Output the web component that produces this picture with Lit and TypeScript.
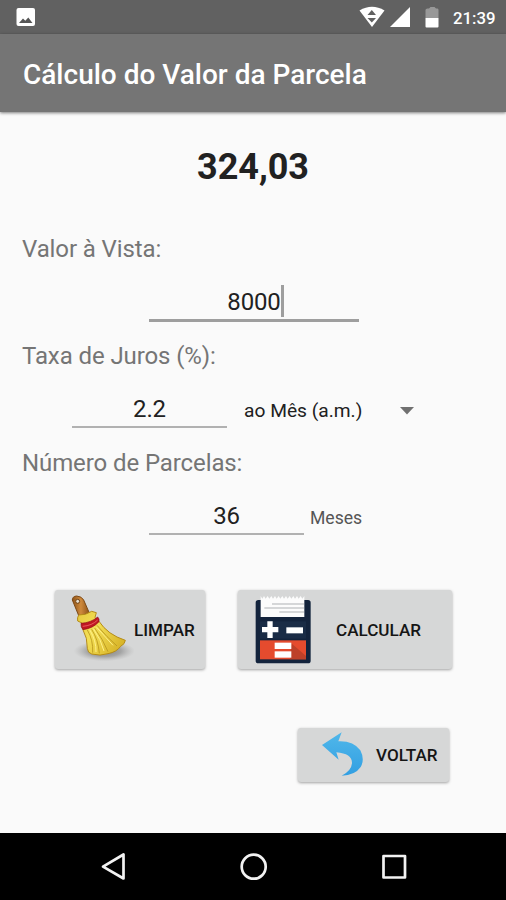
import { LitElement, html, css, svg } from "lit";
import { customElement } from "lit/decorators.js";

const broom = svg`
  <defs>
    <radialGradient id="shade"><stop offset="0" stop-color="#777" stop-opacity=".95"/><stop offset=".55" stop-color="#8a8a8a" stop-opacity=".65"/><stop offset="1" stop-color="#aaa" stop-opacity="0"/></radialGradient>
    <linearGradient id="straw" x1="0" y1="0" x2="1" y2=".6"><stop offset="0" stop-color="#e6c93e"/><stop offset=".45" stop-color="#f3df55"/><stop offset="1" stop-color="#d9b62a"/></linearGradient>
    <linearGradient id="wood" x1="0" y1="0" x2="1" y2="0"><stop offset="0" stop-color="#8d5218"/><stop offset=".5" stop-color="#cf8a3c"/><stop offset="1" stop-color="#8d5218"/></linearGradient>
  </defs>
  <ellipse cx="178" cy="213" rx="92" ry="31" fill="url(#shade)"/>
  <path d="M82 60Q82 49 95 48Q110 49 116 60L133 99L102 109Z" fill="url(#wood)" stroke="#7c4916" stroke-width="3"/>
  <circle cx="98" cy="64" r="6" fill="#e7dfd0" stroke="#6e4215" stroke-width="3"/>
  <path d="M101 105Q122 106 140 94L154 98L150 112L162 124Q188 164 241 181Q240 192 227 199Q215 216 189 221Q166 229 140 222Q128 219 127 205Q128 174 113 147L111 129L98 123Q96 113 101 105Z" fill="url(#straw)" stroke="#b58c18" stroke-width="3" stroke-linejoin="round"/>
  <path d="M127 150Q145 180 143 218M140 148Q160 180 163 220M149 144Q174 178 189 215M156 136Q186 172 216 198" fill="none" stroke="#b9961e" stroke-width="2.5"/>
  <path d="M134 149Q154 182 153 216M145 146Q168 178 177 213M155 142Q184 174 204 196" fill="none" stroke="#fff08a" stroke-width="3"/>
  <path d="M108 130Q138 128 158 111Q164 116 162 125Q144 145 114 149Q107 142 108 130Z" fill="#c01722" stroke="#8e0d16" stroke-width="2"/>
  <path d="M113 139Q141 137 158 120" fill="none" stroke="#ea5a5e" stroke-width="3"/>`;

const calculator = svg`
  <rect x="77" y="60" width="165" height="190" rx="8" fill="#13233c"/>
  <rect x="90" y="124" width="138" height="52" fill="#1a2c46"/>
  <path d="M92 48l5 8 5-8 5 8 6-8 5 8 6-8 5 8 6-8 5 8 6-8 5 8 6-8 5 8 6-8 5 8 6-8 5 8 6-8 5 8 6-8 5 8 6-8 5 8 6-8V111H92Z" fill="#fcfcfc"/>
  <path d="M126 72H222M103 84H222M148 96H222" stroke="#aeb1b4" stroke-width="3"/>
  <path d="M112 124h16v17h17v16h-17v17h-16v-17H96v-16h16Z" fill="#fff"/>
  <rect x="169" y="142" width="50" height="18" fill="#fff"/>
  <rect x="90" y="181" width="138" height="57" fill="#e54b2e"/>
  <path d="M184 190L228 228V238H180Z" fill="#bd4029"/>
  <rect x="134" y="188" width="50" height="19" fill="#fff"/>
  <rect x="134" y="214" width="50" height="19" fill="#fff"/>`;

@customElement("app-root")
export class AppRoot extends LitElement {
  static styles = css`
    :host { display: flex; flex-direction: column; height: 900px; background: #fafafa; font-family: Roboto, sans-serif; color: #212121; overflow: hidden; }
    svg { display: block; flex: none; }
    .status { height: 34px; background: #616161; display: flex; align-items: center; box-sizing: border-box; padding: 0 10px 0 16px; color: #fff; }
    .spacer { flex: 1; }
    .clock { font-size: 16.8px; font-weight: 500; line-height: 34px; width: 43px; white-space: nowrap; padding-top: 1px; }
    .bar { height: 78px; background: #757575; box-shadow: 0 1px 3px rgba(0,0,0,.5); display: flex; align-items: center; padding: 3px 0 0 23px; box-sizing: border-box; }
    h1 { margin: 0; color: #fff; font-size: 28px; font-weight: 500; line-height: 36px; white-space: nowrap; }
    main { flex: 1; min-height: 0; }
    .result { margin-top: 31px; text-align: center; font-size: 36px; font-weight: 700; line-height: 48px; letter-spacing: -.05px; }
    .label { margin-left: 22px; font-size: 24px; line-height: 32px; color: #757575; letter-spacing: -.1px; height: 32px; }
    .first { margin-top: 42px; }
    .row { display: flex; height: 36px; margin: 21px 0 18px; align-items: flex-start; }
    .field { box-sizing: border-box; height: 35px; width: 155px; border-bottom: 2px solid #b1b1b1; text-align: center; font-size: 24px; line-height: 32px; flex: none; letter-spacing: -.15px; }
    .focus { width: 210px; height: 36px; margin-left: 149px; border-color: #9e9e9e; border-bottom-width: 3px; display: flex; justify-content: center; align-items: flex-start; }
    .caret { width: 3px; height: 32px; margin-right: -3px; margin-top: -1px; background: #9e9e9e; }
    .rate { margin-left: 72px; }
    .count { margin-left: 149px; }
    .unit { margin-left: 17px; width: 156px; font-size: 19.2px; line-height: 35px; white-space: nowrap; }
    .months { margin-left: 6px; font-size: 17.6px; line-height: 36px; color: #555; }
    .arrow { margin-top: 14px; }
    button { display: flex; align-items: center; border: 0; padding: 0; margin: 0; border-radius: 3px; background: #d6d7d7; box-shadow: 0 1px 3px rgba(0,0,0,.36); font: 500 17.1px/24px Roboto, sans-serif; color: #151515; white-space: nowrap; }
    .actions { display: flex; gap: 33px; margin: 54px 0 0 55px; }
    .clear { width: 150px; height: 79px; }
    .calc { width: 214px; height: 79px; }
    .back { width: 151px; height: 54px; margin: 59px 0 0 298px; }
    .nav { height: 67px; background: #000; flex: none; display: flex; justify-content: center; }
  `;

  render() {
    return html`
      <div class="status">
        <svg width="20" height="20" viewBox="0 0 20 20"><rect x=".5" y="1" width="18.5" height="18" rx="2" fill="#fff"/><path d="M3 16L7 11.500l2.3 2.3L12.3 10.500 16.500 16Z" fill="#555"/></svg>
        <span class="spacer"></span>
        <svg width="94" height="34" viewBox="0 0 94 34">
          <path d="M.5 10.500Q13 3 25.500 10.500L13 27Z" fill="#fff"/>
          <path d="M8.500 15L12.800 10 17 15ZM8.500 18H17L12.800 22.500Z" fill="#616161"/>
          <path d="M31 27L51 7V27Z" fill="#fff"/>
          <path d="M66.500 18V10q0-1.500 2-1.500h1.500L71.500 7h4l1.500 1.500H78.500q1 0 1 1.500V18Z" fill="#989898"/>
          <path d="M66.500 18H79.500V26.500q0 1-1 1H67.500q-1 0-1-1Z" fill="#fff"/>
        </svg>
        <span class="clock">21:39</span>
      </div>
      <div class="bar"><h1>Cálculo do Valor da Parcela</h1></div>
      <main>
        <div class="result">324,03</div>
        <div class="label first">Valor à Vista:</div>
        <div class="row"><div class="field focus">8000<span class="caret"></span></div></div>
        <div class="label">Taxa de Juros (%):</div>
        <div class="row">
          <div class="field rate">2.2</div>
          <span class="unit">ao Mês (a.m.)</span>
          <svg class="arrow" width="14" height="8" viewBox="0 0 14 8"><path d="M0 0H14L7 7.500Z" fill="#707070"/></svg>
        </div>
        <div class="label">Número de Parcelas:</div>
        <div class="row"><div class="field count">36</div><span class="months">Meses</span></div>
        <div class="actions">
          <button class="clear"><svg width="79" height="79" viewBox="30 30 237 237">${broom}</svg>LIMPAR</button>
          <button class="calc"><svg width="98" height="79" viewBox="24 30 294 237">${calculator}</svg>CALCULAR</button>
        </div>
        <button class="back">
          <svg width="78" height="54" viewBox="24 24 234 162"><defs><linearGradient id="sky" x1="0" y1="0" x2="0" y2="1"><stop offset="0" stop-color="#50b7ea"/><stop offset="1" stop-color="#329fe2"/></linearGradient></defs><path d="M96 75L155 37L145 64Q190 62 211 91Q225 118 212 141Q195 166 155 167Q184 153 186 130Q187 101 139 97L146 119Z" fill="url(#sky)"/></svg>VOLTAR
        </button>
      </main>
      <div class="nav">
        <svg width="350" height="67" viewBox="-2 0 350 67" fill="none" stroke="#f2f2f2" stroke-width="2.700" stroke-linejoin="round">
          <path d="M43.500 21.500V45.500L23 33.700Z"/><circle cx="173.700" cy="33.700" r="12"/><rect x="303.500" y="23" width="21.500" height="21.500"/>
        </svg>
      </div>
    `;
  }
}
